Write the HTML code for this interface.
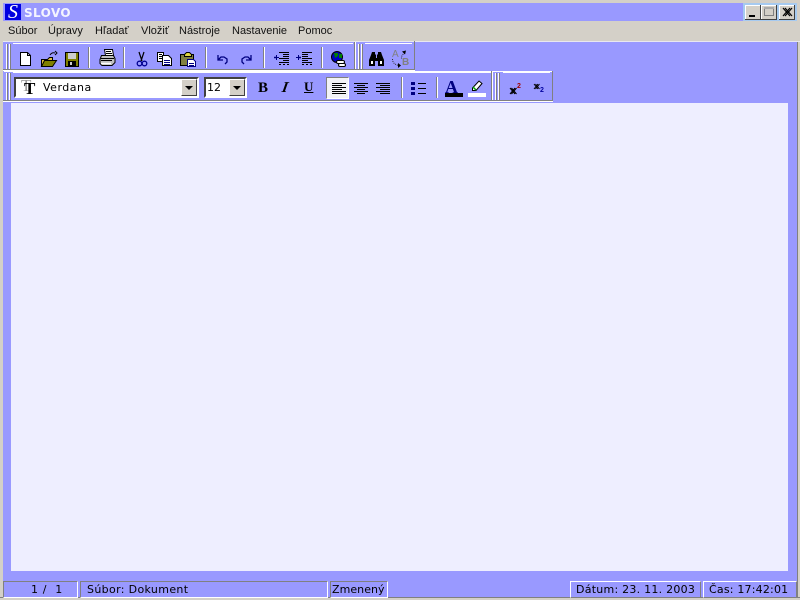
<!DOCTYPE html>
<html><head><meta charset="utf-8"><style>
html,body{margin:0;padding:0;width:800px;height:600px;overflow:hidden;background:#99f}
div{position:absolute;box-sizing:border-box}
.t{white-space:nowrap}
.m{top:24px;font:11px/14px "Liberation Sans",sans-serif;color:#111}
.s{top:581px;height:17px;border:1px solid;border-color:#808080 #fff #fff #808080;font:11px/15px "DejaVu Sans",sans-serif;color:#000;white-space:pre}
.sep{width:2px;background:#fff;border-left:1px solid #808080}
.h{background:#fff}.g{background:#808080}
</style></head><body>
<div style="left:0;top:0;width:800px;height:41px;background:#d4d0c8"></div>
<div style="left:0;top:41px;width:3px;height:559px;background:#d4d0c8"></div>
<div style="left:797px;top:41px;width:3px;height:559px;background:#d4d0c8;border-left:1px solid #808080"></div>
<div style="left:0;top:597px;width:800px;height:3px;background:#d4d0c8;border-top:1px solid #808080"></div>
<div style="left:3px;top:3px;width:794px;height:18px;background:#a6caf0"></div>
<div style="left:3px;top:3px;width:740px;height:18px;background:#99f"></div>
<div style="left:5px;top:4px;width:16px;height:16px;background:#0000e0;color:#fff;font:italic 20px/16px 'Liberation Serif',serif;text-align:center;overflow:hidden">S</div>
<div class="t" style="left:24px;top:6px;font:bold 12px/14px 'DejaVu Sans',sans-serif;color:#f4f4ff;letter-spacing:.4px">SLOVO</div>
<svg style="position:absolute;left:745px;top:5px" width="50" height="15">
<g fill="#d4d0c8"><rect width="16" height="15"/><rect x="16" width="16" height="15"/><rect x="34" width="16" height="15"/></g>
<path d="M.5 14V.5H15M16.500 14V.5H31M34.500 14V.5H49" stroke="#fff" fill="none"/>
<path d="M15.500 0V14.500H0M31.500 0V14.500H16M49.500 0V14.500H34" stroke="#404040" fill="none"/>
<rect x="4" y="10" width="6" height="2" fill="#000"/>
<rect x="19.500" y="2.500" width="9" height="8" fill="none" stroke="#808080"/><rect x="19" y="2" width="10" height="2" fill="#aaa"/>
<path d="M38 3l7 8M40 3l7 8M45 3l-7 8M47 3l-7 8" stroke="#000" stroke-width="1.200"/>
</svg>
<div class="t m" style="left:8px">Súbor</div>
<div class="t m" style="left:48px">Úpravy</div>
<div class="t m" style="left:95px">Hľadať</div>
<div class="t m" style="left:141px">Vložiť</div>
<div class="t m" style="left:179px">Nástroje</div>
<div class="t m" style="left:232px">Nastavenie</div>
<div class="t m" style="left:298px">Pomoc</div>

<!-- toolbar 1 -->
<div class="h" style="left:3px;top:41px;width:797px;height:1px;background:#e8e8f0"></div>
<div class="g" style="left:3px;top:69px;width:412px;height:2px;border-bottom:1px solid #fff"></div>
<div class="g" style="left:414px;top:41px;width:1px;height:29px"></div>
<div class="h" style="left:6px;top:44px;width:1px;height:25px"></div>
<div class="g" style="left:7px;top:44px;width:1px;height:25px"></div>
<div class="h" style="left:9px;top:44px;width:1px;height:25px"></div>
<div class="g" style="left:10px;top:44px;width:1px;height:25px"></div>
<div class="h" style="left:13px;top:43px;width:340px;height:1px"></div>
<div class="g" style="left:354px;top:42px;width:1px;height:27px"></div>
<div class="h" style="left:355px;top:42px;width:1px;height:27px"></div>
<div class="h" style="left:358px;top:44px;width:1px;height:25px"></div>
<div class="g" style="left:359px;top:44px;width:1px;height:25px"></div>
<div class="h" style="left:361px;top:44px;width:1px;height:25px"></div>
<div class="g" style="left:362px;top:44px;width:1px;height:25px"></div>
<div class="h" style="left:365px;top:43px;width:47px;height:1px"></div>
<div class="sep" style="left:88px;top:47px;height:21px"></div>
<div class="sep" style="left:123px;top:47px;height:21px"></div>
<div class="sep" style="left:205px;top:47px;height:21px"></div>
<div class="sep" style="left:263px;top:47px;height:21px"></div>
<div class="sep" style="left:321px;top:47px;height:21px"></div>

<svg style="position:absolute;left:0;top:40px" width="420" height="32">
<path d="M20.500 12.500h7l3 3v10h-10z" fill="#fff" stroke="#000"/>
<path d="M27.500 12.500v3h3" fill="none" stroke="#000"/>
<path d="M41.500 19.500h6l2-2h3v7l-3 2h-8z" fill="#e0c040" stroke="#000"/>
<path d="M41.500 26.500l3-6h12l-4 6z" fill="#808000" stroke="#000"/>
<path d="M50 15q2-3 5-2M55 11l2 2-2 2" fill="none" stroke="#000"/>
<rect x="65.500" y="12.500" width="13" height="14" fill="#808000" stroke="#000"/>
<rect x="68" y="13" width="8" height="6" fill="#ccc"/><rect x="68" y="21" width="8" height="5" fill="#000"/><rect x="70" y="22" width="2" height="3" fill="#ccc"/>
<path d="M104.500 9.500h8l1 6h-8z" fill="#fff" stroke="#000"/>
<path d="M106 11.500h5M106 13.500h6" stroke="#000"/>
<path d="M101.500 15.500h12l1.500 3v4l-3 3h-10l-2-2v-4z" fill="#c0c0c0" stroke="#000"/>
<path d="M101 18.500h13M101 20.500h11" stroke="#000"/>
<path d="M101 23.500h10" stroke="#fff" stroke-width="1.500"/>
<path d="M139 12l3 9M144 12l-3 9" stroke="#000" fill="none" stroke-width="1.200"/>
<circle cx="139.500" cy="23.500" r="2.300" fill="none" stroke="#000090" stroke-width="1.300"/>
<circle cx="144.500" cy="23.500" r="2.300" fill="none" stroke="#000090" stroke-width="1.300"/>
<path d="M157.500 12.500h6v3h-1v6h-5z" fill="#fff" stroke="#000"/>
<path d="M159 14.500h3M159 16.500h3M159 18.500h3" stroke="#000"/>
<path d="M162.500 15.500h6l3 3v7h-9z" fill="#fff" stroke="#000"/>
<path d="M164 20.500h6M164 22.500h6M164 24.500h6" stroke="#000080"/>
<path d="M180.500 14.500h13v11h-13z" fill="#808040" stroke="#000"/>
<path d="M184.500 14.500l2-2h3l2 2v2h-7z" fill="#e0d840" stroke="#000"/>
<path d="M187.500 19.500h6l2 2v5h-8z" fill="#fff" stroke="#000080"/>
<path d="M189 23.500h5M189 25.500h5" stroke="#000080"/>
<path d="M218 15v5h5M218 20l3-3h3l3 2v3l-2 2" fill="none" stroke="#000080" stroke-width="1.300"/>
<path d="M251 15v5h-5M251 20l-3-3h-3l-3 2v3l2 2" fill="none" stroke="#000080" stroke-width="1.300"/>
<path d="M279 12.500h10M283 14.500h6M283 16.500h6M279 18.500h10M283 20.500h6M279 22.500h10" stroke="#000"/>
<path d="M279 24.500h2M283 24.500h2M287 24.500h2" stroke="#000"/>
<path d="M274 17.500h5M276.500 15v5M275 16.500v2" stroke="#000080" fill="none"/>
<path d="M302 12.500h10M302 14.500h6M302 16.500h6M302 18.500h10M302 20.500h6M302 22.500h10" stroke="#000"/>
<path d="M302 24.500h2M306 24.500h2M310 24.500h2" stroke="#000"/>
<path d="M296 17.500h5M298.500 15v5M300 16.500v2" stroke="#000080" fill="none"/>
<circle cx="337" cy="17" r="5.500" fill="#0000c0" stroke="#000"/>
<path d="M334 13h4v3l-3 2zM339 14h3v4h-3z" fill="#008000"/>
<rect x="336.500" y="20.500" width="8" height="3" rx="1.500" fill="#fff" stroke="#000"/>
<rect x="338.500" y="23.500" width="7" height="3" rx="1.500" fill="#fff" stroke="#000"/>
<path d="M371 12h4v3h-0.500v3h2v-3h-0.500v0h-0v-3h0h4v0l0 0 4 0 0 0z" fill="none"/>
<path d="M372 12h3v2l1 1h0v3h1v-3l1-1v-2h3l1 3 2 5v6h-6v-5h-3v5h-6v-6l2-5z" fill="#000"/>
<path d="M371 21h2v3h-2zM380 21h2v3h-2z" fill="#fff"/>
<path d="M392.500 19q0 5 6 6.500M405 13q-4 2-3.500 6" fill="none" stroke="#303030" stroke-dasharray="1 1"/>
<path d="M398 23l3 2.500-3 2.500z" fill="#000"/><path d="M406 10.500l-4 1 3 3z" fill="#000"/>
</svg>
<div class="t" style="left:392px;top:50px;font:10px/10px 'Liberation Sans',sans-serif;color:#808080">A</div>
<div class="t" style="left:402px;top:58px;font:bold 10px/10px 'Liberation Sans',sans-serif;color:#808080">B</div>

<!-- toolbar 2 -->
<div class="g" style="left:3px;top:100px;width:550px;height:2px;border-bottom:1px solid #fff"></div>
<div class="g" style="left:552px;top:71px;width:1px;height:30px"></div>
<div class="h" style="left:4px;top:71px;width:548px;height:1px"></div>
<div class="h" style="left:6px;top:73px;width:1px;height:27px"></div>
<div class="g" style="left:7px;top:73px;width:1px;height:27px"></div>
<div class="h" style="left:9px;top:73px;width:1px;height:27px"></div>
<div class="g" style="left:10px;top:73px;width:1px;height:27px"></div>
<div class="h" style="left:13px;top:72px;width:478px;height:1px"></div>
<div class="g" style="left:491px;top:71px;width:1px;height:29px"></div>
<div class="h" style="left:492px;top:71px;width:1px;height:29px"></div>
<div class="h" style="left:495px;top:73px;width:1px;height:27px"></div>
<div class="g" style="left:496px;top:73px;width:1px;height:27px"></div>
<div class="h" style="left:498px;top:73px;width:1px;height:27px"></div>
<div class="g" style="left:499px;top:73px;width:1px;height:27px"></div>
<div class="h" style="left:503px;top:72px;width:47px;height:1px"></div>
<div class="sep" style="left:401px;top:77px;height:21px"></div>
<div class="sep" style="left:436px;top:77px;height:21px"></div>

<!-- font combo -->
<div style="left:14px;top:77px;width:185px;height:21px;background:#fff;border:2px solid;border-color:#404040 #fff #fff #404040"></div>
<div class="t" style="left:21px;top:78px;font:17px/16px 'Liberation Serif',serif;color:#999">T</div>
<div class="t" style="left:24px;top:81px;font:bold 17px/16px 'Liberation Serif',serif;color:#000">T</div>
<div class="t" style="left:43px;top:81px;font:11px/13px 'DejaVu Sans',sans-serif;color:#000;letter-spacing:.5px">Verdana</div>
<div style="left:181px;top:79px;width:16px;height:17px;background:#d4d0c8;border:1px solid;border-color:#fff #404040 #404040 #fff"></div>
<div style="left:185px;top:86px;width:0;height:0;border:4px solid transparent;border-top:4px solid #000;border-bottom:0"></div>
<!-- size combo -->
<div style="left:204px;top:77px;width:43px;height:21px;background:#fff;border:2px solid;border-color:#404040 #fff #fff #404040"></div>
<div class="t" style="left:207px;top:81px;font:11px/13px 'DejaVu Sans',sans-serif;color:#000">12</div>
<div style="left:229px;top:79px;width:16px;height:17px;background:#d4d0c8;border:1px solid;border-color:#fff #404040 #404040 #fff"></div>
<div style="left:233px;top:86px;width:0;height:0;border:4px solid transparent;border-top:4px solid #000;border-bottom:0"></div>

<div class="t" style="left:258px;top:81px;font:bold 15px/15px 'Liberation Serif',serif;color:#000">B</div>
<div class="t" style="left:282px;top:81px;font:italic bold 15px/15px 'Liberation Serif',serif;color:#000;transform:skewX(-10deg)">I</div>
<div class="t" style="left:304px;top:80px;font:bold 13px/14px 'Liberation Serif',serif;color:#000;text-decoration:underline">U</div>
<div style="left:326px;top:77px;width:23px;height:22px;background:#f2f2f6;border:1px solid;border-color:#808080 #fff #fff #808080"></div>
<svg style="position:absolute;left:320px;top:70px" width="240" height="32">
<path d="M12 13.500h14M12 15.500h10M12 17.500h14M12 19.500h10M12 21.500h14M12 23.500h14" stroke="#000"/>
<path d="M34 13.500h14M37 15.500h8M34 17.500h14M37 19.500h8M34 21.500h14M37 23.500h8" stroke="#000"/>
<path d="M56 13.500h14M60 15.500h10M56 17.500h14M60 19.500h10M56 21.500h14M60 23.500h10" stroke="#000"/>
<path d="M91 12h4v3h-4zM91 17h4v3h-4zM91 22h4v3h-4z" fill="#000080"/>
<path d="M98 13.500h8M98 18.500h8M98 23.500h8" stroke="#000"/>
<rect x="125" y="23" width="18" height="4" fill="#000"/>
<rect x="148" y="23" width="18" height="4" fill="#fff"/>
<path d="M159 11l3 2.500-6 7h-3.500v-2.500z" fill="#fff" stroke="#000"/><path d="M153 17l3 3" stroke="#00a000" stroke-width="1.500"/>
<path d="M190 18l5 6M195 18l-5 6M191.500 18l5 6M196.500 18l-5 6" stroke="#000"/>
<path d="M214 14l4 5M218 14l-4 5M215.500 14l4 5M219.500 14l-4 5" stroke="#000"/>
</svg>
<div class="t" style="left:445px;top:80px;font:bold 18px/15px 'Liberation Serif',serif;color:#000080">A</div>
<div class="t" style="left:517px;top:83px;font:bold 7px/8px 'Liberation Sans',sans-serif;color:#a00000">2</div>
<div class="t" style="left:540px;top:87px;font:bold 7px/8px 'Liberation Sans',sans-serif;color:#0000a0">2</div>

<!-- editor -->
<div style="left:11px;top:103px;width:777px;height:468px;background:#eef"></div>

<!-- status -->
<div class="s" style="left:3px;width:75px;padding-left:27px;letter-spacing:.6px">1 /  1</div>
<div class="s" style="left:80px;width:248px;padding-left:6px;letter-spacing:.35px">Súbor: Dokument</div>
<div class="s" style="left:330px;width:58px;padding-left:1px;letter-spacing:.05px">Zmenený</div>
<div class="s" style="left:570px;width:131px;padding-left:5px;letter-spacing:.25px;border-color:#fff #808080 #808080 #fff">Dátum: 23. 11. 2003</div>
<div class="s" style="left:703px;width:94px;padding-left:5px;letter-spacing:.2px;border-color:#fff #808080 #808080 #fff">Čas: 17:42:01</div>
</body></html>
